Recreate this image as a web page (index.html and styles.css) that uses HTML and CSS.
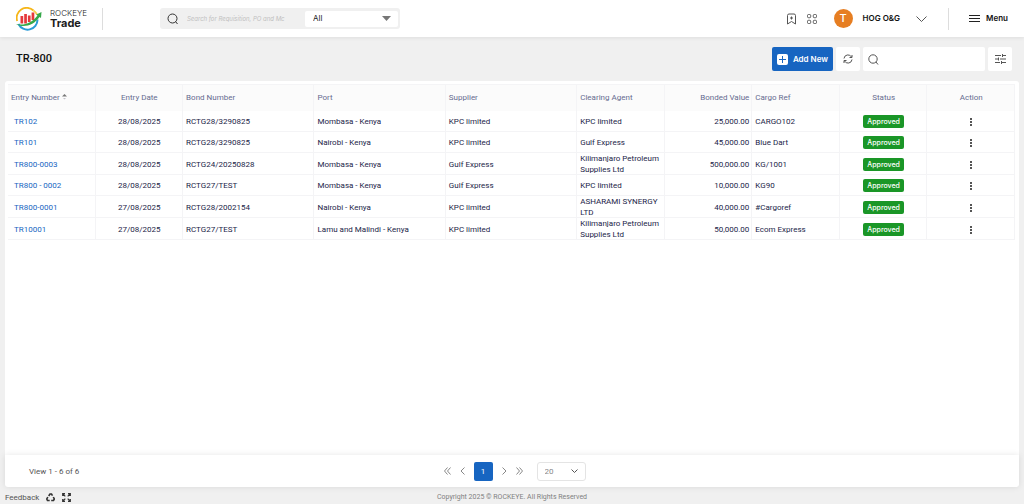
FILE: index.html
```html
<!DOCTYPE html>
<html lang="en">
<head>
  <meta charset="UTF-8">
  <meta name="viewport" content="width=device-width, initial-scale=1.0">
  <title>ROCKEYE Trade</title>
  <link rel="stylesheet" href="styles.css">
</head>
<body>
  <header class="topbar">
    <a class="brand" href="#">
      <svg width="27" height="24" viewBox="0 0 27 24" fill="none">
        <path d="M1.200 14A10 10 0 0 1 17.500 3.500" stroke="#f6b619" stroke-width="1.800"/>
        <path d="M17.500 3.500a10 10 0 0 1 3.500 4" stroke="#f9cf4a" stroke-width="1.800"/>
        <path d="M2.500 17A10 10 0 0 0 21.500 12.500" stroke="#2a9bd8" stroke-width="2"/>
        <path d="M4.500 9h2.700v7.500H4.500zM8.200 7h2.700v9.500H8.200zM11.900 8.500h2.700V15h-2.700zM15.600 5.500h2.700V13h-2.700z" fill="#e5383b"/>
        <path d="M0 17c8 2 16-1 21.500-8.500l-1.500-.8 5.500-2.700-.5 6-1.500-.9C18 18.500 7 21.500 0 17z" fill="#35a849"/>
      </svg>
      <span class="brand-text">
        <span class="brand-top">ROCKEYE</span>
        <span class="brand-name">Trade</span>
      </span>
    </a>
    <div class="global-search">
      <svg width="12" height="12" viewBox="0 0 12 12" fill="none" stroke="#333"><circle cx="5.500" cy="5.500" r="4.500"/><path d="M8.500 8.500l2 2.500"/></svg>
      <input type="text" aria-label="Global search" placeholder="Search for Requisition, PO and Mc">
      <div class="scope">
        <select aria-label="Search in"><option>All</option></select>
        <svg width="9" height="5" viewBox="0 0 9 5"><path d="M0 0h9L4.500 5z" fill="#777"/></svg>
      </div>
    </div>
    <div class="top-actions">
      <button class="icon-btn" aria-label="Bookmark">
        <svg width="11" height="12" viewBox="0 0 11 12" fill="none" stroke="#555"><path d="M1.500 11V2.500a1.500 1.500 0 0 1 1.500-1.500h5a1.500 1.500 0 0 1 1.500 1.500V11l-4-2.500zM5.500 3.500v3M4 5h3"/></svg>
      </button>
      <button class="icon-btn apps" aria-label="Apps">
        <svg width="10" height="10" viewBox="0 0 10 10" fill="none" stroke="#555"><rect x=".5" y=".5" width="3.200" height="3.200" rx="1"/><rect x="6.300" y=".5" width="3.200" height="3.200" rx="1"/><rect x=".5" y="6.300" width="3.200" height="3.200" rx="1"/><rect x="6.300" y="6.300" width="3.200" height="3.200" rx="1"/></svg>
      </button>
      <button class="account">
        <span class="avatar">T</span>
        <span class="company">HOG O&amp;G</span>
        <svg width="11" height="6" viewBox="0 0 11 6" fill="none" stroke="#555"><path d="M.5.500l5 5 5-5"/></svg>
      </button>
      <button class="menu-btn">
        <svg width="11" height="9" viewBox="0 0 11 9" stroke="#222"><path d="M0 1.500h11M0 4.500h11M0 7.500h11"/></svg>
        Menu
      </button>
    </div>
  </header>

  <main>
    <div class="toolbar">
      <h1>TR-800</h1>
      <div class="tools">
        <button class="add-btn">
          <svg width="11" height="11" viewBox="0 0 11 11"><rect width="11" height="11" rx="2" fill="#fff"/><path d="M5.500 2v7M2 5.500h7" stroke="#1765c1"/></svg>
          Add New
        </button>
        <button class="tool-btn" aria-label="Refresh">
          <svg width="10" height="10" viewBox="0 0 10 10" fill="none" stroke="#555"><path d="M1 4.500A4 4 0 0 1 8.500 3M9 1v2.500H6.500M9 5.500A4 4 0 0 1 1.500 7M1 9V6.500h2.500"/></svg>
        </button>
        <div class="list-search">
          <svg width="11" height="11" viewBox="0 0 11 11" fill="none" stroke="#555"><circle cx="5" cy="5" r="4.200"/><path d="M8 8l2 2.500"/></svg>
          <input type="text" aria-label="Search list">
        </div>
        <button class="tool-btn" aria-label="Filter">
          <svg width="11" height="10" viewBox="0 0 11 10" fill="none" stroke="#555"><path d="M0 1.500h6M8 1.500h3M7.500 0v3M0 5h3M5 5h6M3.500 3.500v3M0 8.500h5M7 8.500h4M6.500 7v3"/></svg>
        </button>
      </div>
    </div>

    <section class="list">
      <table>
        <colgroup>
          <col class="narrow"><col class="narrow"><col class="wide"><col class="wide"><col class="wide">
          <col class="narrow"><col class="narrow"><col class="narrow"><col class="narrow"><col class="narrow">
        </colgroup>
        <thead>
          <tr>
            <th>Entry Number <svg width="5" height="6" viewBox="0 0 5 6"><path d="M0 2.500L2.500 0 5 2.500z" fill="#777"/><path d="M1 4l1.500 1.500L4 4z" fill="#c4c4cc"/></svg></th>
            <th class="center">Entry Date</th>
            <th>Bond Number</th>
            <th>Port</th>
            <th>Supplier</th>
            <th>Clearing Agent</th>
            <th class="right">Bonded Value</th>
            <th>Cargo Ref</th>
            <th class="center">Status</th>
            <th class="center">Action</th>
          </tr>
        </thead>
        <tbody>
          <tr>
            <td class="entry"><a href="#">TR102</a></td>
            <td class="center">28/08/2025</td>
            <td>RCTG28/3290825</td>
            <td>Mombasa - Kenya</td>
            <td>KPC limited</td>
            <td>KPC limited</td>
            <td class="right">25,000.00</td>
            <td>CARGO102</td>
            <td class="center"><span class="status">Approved</span></td>
            <td class="center"><button class="more" aria-label="Actions"></button></td>
          </tr>
          <tr>
            <td class="entry"><a href="#">TR101</a></td>
            <td class="center">28/08/2025</td>
            <td>RCTG28/3290825</td>
            <td>Nairobi - Kenya</td>
            <td>KPC limited</td>
            <td>Gulf Express</td>
            <td class="right">45,000.00</td>
            <td>Blue Dart</td>
            <td class="center"><span class="status">Approved</span></td>
            <td class="center"><button class="more" aria-label="Actions"></button></td>
          </tr>
          <tr>
            <td class="entry"><a href="#">TR800-0003</a></td>
            <td class="center">28/08/2025</td>
            <td>RCTG24/20250828</td>
            <td>Mombasa - Kenya</td>
            <td>Gulf Express</td>
            <td>Kilimanjaro Petroleum Supplies Ltd</td>
            <td class="right">500,000.00</td>
            <td>KG/1001</td>
            <td class="center"><span class="status">Approved</span></td>
            <td class="center"><button class="more" aria-label="Actions"></button></td>
          </tr>
          <tr>
            <td class="entry"><a href="#">TR800 - 0002</a></td>
            <td class="center">28/08/2025</td>
            <td>RCTG27/TEST</td>
            <td>Mombasa - Kenya</td>
            <td>Gulf Express</td>
            <td>KPC limited</td>
            <td class="right">10,000.00</td>
            <td>KG90</td>
            <td class="center"><span class="status">Approved</span></td>
            <td class="center"><button class="more" aria-label="Actions"></button></td>
          </tr>
          <tr>
            <td class="entry"><a href="#">TR800-0001</a></td>
            <td class="center">27/08/2025</td>
            <td>RCTG28/2002154</td>
            <td>Nairobi - Kenya</td>
            <td>KPC limited</td>
            <td>ASHARAMI SYNERGY LTD</td>
            <td class="right">40,000.00</td>
            <td>#Cargoref</td>
            <td class="center"><span class="status">Approved</span></td>
            <td class="center"><button class="more" aria-label="Actions"></button></td>
          </tr>
          <tr>
            <td class="entry"><a href="#">TR10001</a></td>
            <td class="center">27/08/2025</td>
            <td>RCTG27/TEST</td>
            <td>Lamu and Malindi - Kenya</td>
            <td>KPC limited</td>
            <td>Kilimanjaro Petroleum Supplies Ltd</td>
            <td class="right">50,000.00</td>
            <td>Ecom Express</td>
            <td class="center"><span class="status">Approved</span></td>
            <td class="center"><button class="more" aria-label="Actions"></button></td>
          </tr>
        </tbody>
      </table>
    </section>

    <div class="pager">
      <span class="count">View 1 - 6 of 6</span>
      <nav class="pages">
        <button class="icon-btn" aria-label="First page"><svg width="7" height="8" viewBox="0 0 7 8" fill="none" stroke="#888"><path d="M3.500.500L.5 4l3 3.500M6.500.500L3.500 4l3 3.500"/></svg></button>
        <button class="icon-btn" aria-label="Previous page"><svg width="5" height="8" viewBox="0 0 5 8" fill="none" stroke="#888"><path d="M4.500.500L1 4l3.500 3.500"/></svg></button>
        <button class="page current">1</button>
        <button class="icon-btn" aria-label="Next page"><svg width="5" height="8" viewBox="0 0 5 8" fill="none" stroke="#888"><path d="M.5.500L4 4 .5 7.500"/></svg></button>
        <button class="icon-btn" aria-label="Last page"><svg width="7" height="8" viewBox="0 0 7 8" fill="none" stroke="#888"><path d="M.5.500l3 3.500-3 3.500M3.500.500l3 3.500-3 3.500"/></svg></button>
        <div class="page-size">
          <select aria-label="Rows per page"><option>20</option></select>
          <svg width="7" height="5" viewBox="0 0 7 5" fill="none" stroke="#555"><path d="M.5.500l3 3 3-3"/></svg>
        </div>
      </nav>
    </div>
  </main>

  <footer>
    <div class="foot-links">
      <a href="#">Feedback</a>
      <button class="icon-btn" aria-label="Clear cache">
        <svg width="9" height="9" viewBox="0 0 9 9" fill="none" stroke="#333" stroke-width="1.600"><path d="M2.700 3L4 1h1.500l1 1.700M7.300 4l1 2-.8 1.500H5.200M3.700 7.500H1.500L.8 6l1-2"/></svg>
      </button>
      <button class="icon-btn" aria-label="Full screen">
        <svg width="9" height="9" viewBox="0 0 9 9" fill="none" stroke="#333" stroke-width="1.200"><path d="M.7 3V.7H3M6 .7h2.300V3M8.300 6v2.300H6M3 8.300H.7V6M1 1l2.300 2.300M8 1L5.700 3.300M8 8L5.700 5.700M1 8l2.300-2.300"/></svg>
      </button>
    </div>
    <span class="copyright">Copyright 2025 © ROCKEYE. All Rights Reserved</span>
  </footer>
</body>
</html>
```

FILE: styles.css
```css
* {
  box-sizing: border-box;
}
body {
  margin: 0;
  min-height: 100vh;
  display: flex;
  flex-direction: column;
  background-color: #f0f0f0;
  color: #1b2448;
  font-family: Roboto, "Liberation Sans", sans-serif;
  font-size: 8px;
  line-height: 11px;
}
svg {
  display: block;
  flex: none;
}
button, input, select {
  font: inherit;
  color: inherit;
  border: none;
  background: none;
  padding: 0;
  margin: 0;
  outline: none;
}
button {
  cursor: pointer;
}
a {
  color: inherit;
  text-decoration: none;
}

/* top bar */
.topbar {
  display: flex;
  align-items: center;
  height: 37px;
  padding: 0 16px;
  background-color: #fff;
  box-shadow: 0 1px 4px rgba(0, 0, 0, 0.08);
  font-family: Inter, sans-serif;
}
.brand {
  display: flex;
  align-items: center;
  gap: 7px;
  width: 87px;
  height: 22px;
  border-right: 1px solid #ddd;
  color: #1c1c1c;
}
.brand-text {
  display: flex;
  flex-direction: column;
}
.brand-top {
  font-size: 8px;
  line-height: 9px;
  font-weight: 300;
}
.brand-name {
  font-size: 11px;
  line-height: 11px;
  font-weight: 700;
}
.global-search {
  display: flex;
  align-items: center;
  width: 240px;
  height: 21px;
  margin-left: 57px;
  padding: 0 2px 0 7px;
  background-color: #f0f0f0;
  border-radius: 3px;
}
.global-search input {
  flex: 1;
  min-width: 0;
  margin: 0 18px 0 8px;
  font-size: 6px;
  font-style: italic;
}
.global-search input::placeholder {
  color: #c0c0c0;
}
.scope {
  display: flex;
  align-items: center;
  width: 93px;
  height: 16px;
  padding: 0 7px 0 8px;
  background-color: #fff;
  border-radius: 2px;
  color: #222;
}
select {
  flex: 1;
  appearance: none;
}
.top-actions {
  display: flex;
  align-items: center;
  margin-left: auto;
}
.apps {
  margin: 0 17px 0 10px;
}
.account {
  display: flex;
  align-items: center;
  height: 22px;
  padding-right: 21px;
  border-right: 1px solid #ddd;
  color: #111;
  font-weight: 600;
}
.avatar {
  width: 19px;
  height: 19px;
  border-radius: 50%;
  background-color: #e67e22;
  color: #fff;
  font-size: 11px;
  line-height: 19px;
  font-weight: 500;
}
.company {
  margin: 0 16px 0 10px;
}
.menu-btn {
  display: flex;
  align-items: center;
  gap: 6px;
  margin-left: 20px;
  color: #111;
  font-weight: 600;
}

/* page */
main {
  flex: 1;
  display: flex;
  flex-direction: column;
  padding: 0 5px;
}
.toolbar {
  display: flex;
  align-items: center;
  justify-content: space-between;
  height: 44px;
  padding: 0 7px 0 11px;
}
h1 {
  margin: 0;
  color: #111;
  font-size: 11px;
  line-height: 14px;
  font-weight: 500;
}
.tools {
  display: flex;
  gap: 3px;
}
.add-btn {
  display: flex;
  align-items: center;
  gap: 5px;
  height: 24px;
  padding: 0 5px;
  border-radius: 2px;
  background-color: #1765c1;
  color: #fff;
  font-family: Inter, sans-serif;
  font-weight: 600;
}
.tool-btn {
  display: flex;
  align-items: center;
  justify-content: center;
  width: 24px;
  height: 24px;
  border-radius: 2px;
  background-color: #fff;
}
.list-search {
  display: flex;
  align-items: center;
  gap: 5px;
  width: 122px;
  height: 24px;
  padding: 0 5px;
  border-radius: 2px;
  background-color: #fff;
}
.list-search input {
  flex: 1;
  min-width: 0;
}

/* table */
.list {
  flex: 1;
  padding: 3px 4px 3px 3px;
  background-color: #fff;
  border-radius: 3px 3px 0 0;
}
table {
  width: 100%;
  table-layout: fixed;
  border-collapse: separate;
  border-spacing: 0;
}
.narrow {
  width: 2%;
}
.wide {
  width: 3%;
}
th, td {
  height: 21px;
  padding: 0 3px;
  text-align: left;
  vertical-align: middle;
  font-weight: 400;
  box-shadow: inset -1px -1px #f4f4f6;
}
th {
  height: 27px;
  background-color: #fbfbfb;
  color: #666b90;
  box-shadow: inset -1px 1px #f4f4f6;
}
th svg {
  display: inline-block;
  vertical-align: 0;
}
.center {
  text-align: center;
}
.right {
  text-align: right;
}
.entry {
  padding-left: 6px;
  color: #1765c1;
}
.status {
  display: block;
  width: 41px;
  margin: 0 auto;
  border-radius: 2px;
  background-color: #1a9627;
  color: #fff;
  font-family: Inter, sans-serif;
  font-size: 7px;
  line-height: 13px;
  font-weight: 500;
}
.more {
  display: block;
  width: 8px;
  height: 9px;
  margin: 2px auto 0;
  background: linear-gradient(#555 2px, transparent 2px) center top / 2px 3px repeat-y;
}

/* pager */
.pager {
  display: grid;
  grid-template-columns: 1fr auto 1fr;
  align-items: center;
  height: 32px;
  padding: 0 24px;
  background-color: #fff;
  border-radius: 0 0 3px 3px;
  box-shadow: 0 0 6px rgba(0, 0, 0, 0.1);
  color: #555;
}
.pages {
  display: flex;
  align-items: center;
  gap: 9px;
  padding-left: 5px;
}
.page {
  width: 19px;
  height: 19px;
  border-radius: 2px;
}
.current {
  background-color: #1765c1;
  color: #fff;
}
.page-size {
  display: flex;
  align-items: center;
  width: 49px;
  height: 19px;
  margin-left: 5px;
  padding: 0 7px;
  border: 1px solid #e4e4e4;
  border-radius: 3px;
  color: #888;
}

/* footer */
footer {
  display: grid;
  grid-template-columns: 1fr auto 1fr;
  align-items: center;
  height: 17px;
  padding: 3px 5px 0;
  color: #555;
  font-size: 7px;
}
.foot-links {
  display: flex;
  align-items: center;
  gap: 7px;
}
.foot-links a {
  font-size: 8px;
}
.copyright {
  color: #808080;
}
```
